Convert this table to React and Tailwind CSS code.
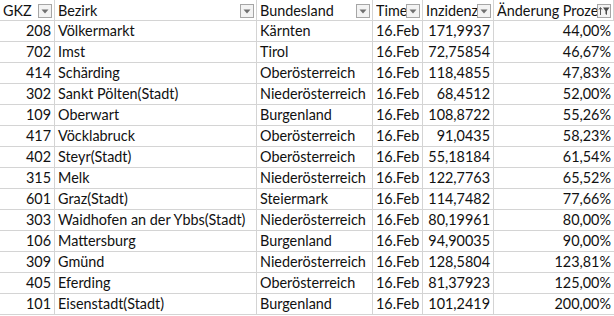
import React from 'react';

const rows = [
  ['208', 'Völkermarkt', 'Kärnten', '16.Feb', '171,9937', '44,00%'],
  ['702', 'Imst', 'Tirol', '16.Feb', '72,75854', '46,67%'],
  ['414', 'Schärding', 'Oberösterreich', '16.Feb', '118,4855', '47,83%'],
  ['302', 'Sankt Pölten(Stadt)', 'Niederösterreich', '16.Feb', '68,4512', '52,00%'],
  ['109', 'Oberwart', 'Burgenland', '16.Feb', '108,8722', '55,26%'],
  ['417', 'Vöcklabruck', 'Oberösterreich', '16.Feb', '91,0435', '58,23%'],
  ['402', 'Steyr(Stadt)', 'Oberösterreich', '16.Feb', '55,18184', '61,54%'],
  ['315', 'Melk', 'Niederösterreich', '16.Feb', '122,7763', '65,52%'],
  ['601', 'Graz(Stadt)', 'Steiermark', '16.Feb', '114,7482', '77,66%'],
  ['303', 'Waidhofen an der Ybbs(Stadt)', 'Niederösterreich', '16.Feb', '80,19961', '80,00%'],
  ['106', 'Mattersburg', 'Burgenland', '16.Feb', '94,90035', '90,00%'],
  ['309', 'Gmünd', 'Niederösterreich', '16.Feb', '128,5804', '123,81%'],
  ['405', 'Eferding', 'Oberösterreich', '16.Feb', '81,37923', '125,00%'],
  ['101', 'Eisenstadt(Stadt)', 'Burgenland', '16.Feb', '101,2419', '200,00%'],
];

const headers = ['GKZ', 'Bezirk', 'Bundesland', 'Time', 'Inzidenz', 'Änderung Prozent'];

// right-aligned columns: GKZ, Inzidenz, Änderung
const align = ['text-right', 'text-left', 'text-left', 'text-left', 'text-right', 'text-right'];

const DropButton = ({ filtered }) => (
  <div className="w-[14px] h-[14px] border border-[#a6a6a6] bg-[#f3f3f3] flex items-center justify-center shrink-0">
    {filtered ? (
      <svg width="12" height="10" viewBox="0 0 12 10">
        <path d="M2.5 9V2M1 3.5L2.5 1.5L4 3.5" stroke="#555" strokeWidth="1" fill="none" />
        <path d="M5 1.5H11.5L9 5V9L7.5 8V5Z" fill="#4a4a4a" />
      </svg>
    ) : (
      <svg width="8" height="5" viewBox="0 0 8 5">
        <path d="M0.5 0.5H7.5L4 4.5Z" fill="#707070" />
      </svg>
    )}
  </div>
);

const App = () => {
  return (
    <div
      className="w-[614px] h-[316px] overflow-hidden bg-white text-[#111] text-[14.4px] leading-[17px]"
      style={{ fontFamily: 'Lato, "Open Sans", sans-serif' }}
    >
      <div className="grid grid-cols-[55px_202px_116px_50px_71px_120px]">
        {headers.map((h, i) => (
          <div
            key={h}
            className="h-[21px] border-b border-r border-[#d4d4d4] flex items-end pb-[1px] pl-[3px] pr-[2px] last:border-r-0"
          >
            <span className="flex-1 min-w-0 overflow-hidden whitespace-nowrap">{h}</span>
            <div className="self-start mt-[4px]">
              <DropButton filtered={i === 5} />
            </div>
          </div>
        ))}
        {rows.map((r) =>
          r.map((c, i) => (
            <div
              key={r[0] + i}
              className={`h-[21px] border-b border-r border-[#d4d4d4] flex items-end pb-[2px] px-[3px] whitespace-nowrap overflow-hidden ${
                i === 5 ? 'border-r-0' : ''
              }`}
            >
              <span className={`w-full ${align[i]}`}>{c}</span>
            </div>
          ))
        )}
      </div>
    </div>
  );
};

export default App;
